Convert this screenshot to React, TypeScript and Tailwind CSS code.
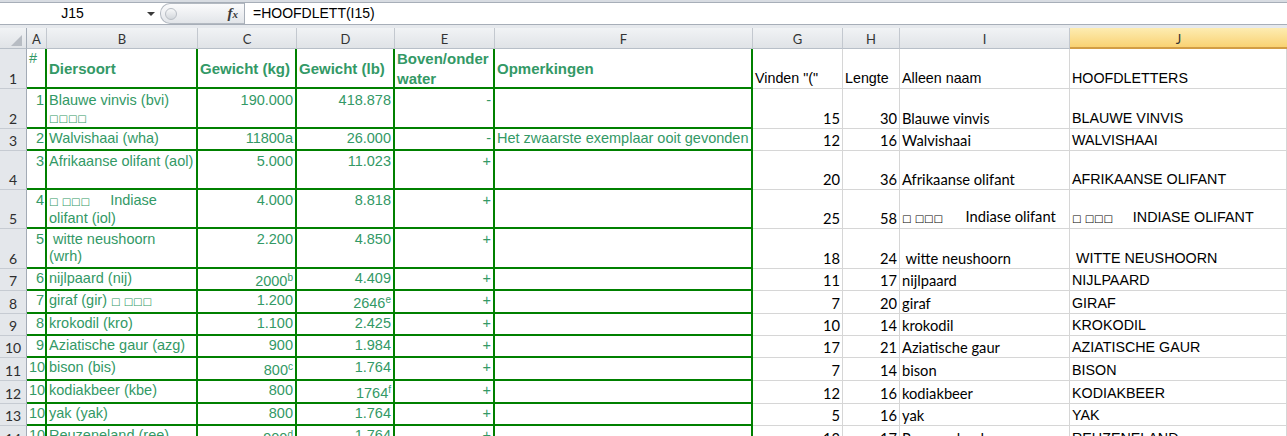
import React from 'react';

type RowSpec = {
  n: number;
  h: string;
  pt: string;
  a: React.ReactNode;
  b: React.ReactNode;
  c: React.ReactNode;
  d: React.ReactNode;
  e: React.ReactNode;
  f?: React.ReactNode;
  g: string;
  hh: string;
  i: React.ReactNode;
  j: React.ReactNode;
};

const Tofu = ({ s }: { s: string }) => (
  <span className="font-['DejaVu_Sans',sans-serif] text-[10px]">{s}</span>
);

const Sup = ({ v, s }: { v: string; s: string }) => (
  <span className="inline-block pt-[3px]">
    {v}
    <sup className="text-[10px]">{s}</sup>
  </span>
);

const rows: RowSpec[] = [
  {
    n: 2, h: 'h-[40px]', pt: 'pt-[3px]', a: '1',
    b: (<>Blauwe vinvis (bvi)<br /><Tofu s="□□□□" /></>),
    c: '190.000', d: '418.878', e: '-', g: '15', hh: '30', i: 'Blauwe vinvis', j: 'BLAUWE VINVIS',
  },
  {
    n: 3, h: 'h-[22px]', pt: 'pt-[1px]', a: '2', b: 'Walvishaai (wha)', c: '11800a', d: '26.000', e: '-',
    f: 'Het zwaarste exemplaar ooit gevonden', g: '12', hh: '16', i: 'Walvishaai', j: 'WALVISHAAI',
  },
  {
    n: 4, h: 'h-[39px]', pt: 'pt-[2px]', a: '3', b: 'Afrikaanse olifant (aol)', c: '5.000', d: '11.023', e: '+',
    g: '20', hh: '36', i: 'Afrikaanse olifant', j: 'AFRIKAANSE OLIFANT',
  },
  {
    n: 5, h: 'h-[39px]', pt: 'pt-[2px]', a: '4',
    b: (<><Tofu s="□ □□□" />{'     '}Indiase<br />olifant (iol)</>),
    c: '4.000', d: '8.818', e: '+', g: '25', hh: '58',
    i: (<><Tofu s="□ □□□" />{'      '}Indiase olifant</>),
    j: (<><Tofu s="□ □□□" />{'     '}INDIASE OLIFANT</>),
  },
  {
    n: 6, h: 'h-[40px]', pt: 'pt-[2px]', a: '5',
    b: (<>{' '}witte neushoorn<br />(wrh)</>),
    c: '2.200', d: '4.850', e: '+', g: '18', hh: '24', i: ' witte neushoorn', j: ' WITTE NEUSHOORN',
  },
  {
    n: 7, h: 'h-[22px]', pt: 'pt-[1px]', a: '6', b: 'nijlpaard (nij)', c: <Sup v="2000" s="b" />, d: '4.409', e: '+',
    g: '11', hh: '17', i: 'nijlpaard', j: 'NIJLPAARD',
  },
  {
    n: 8, h: 'h-[23px]', pt: 'pt-[1px]', a: '7', b: (<>giraf (gir) <Tofu s="□ □□□" /></>), c: '1.200',
    d: <Sup v="2646" s="e" />, e: '+', g: '7', hh: '20', i: 'giraf', j: 'GIRAF',
  },
  {
    n: 9, h: 'h-[22px]', pt: 'pt-[1px]', a: '8', b: 'krokodil (kro)', c: '1.100', d: '2.425', e: '+',
    g: '10', hh: '14', i: 'krokodil', j: 'KROKODIL',
  },
  {
    n: 10, h: 'h-[22px]', pt: 'pt-[1px]', a: '9', b: 'Aziatische gaur (azg)', c: '900', d: '1.984', e: '+',
    g: '17', hh: '21', i: 'Aziatische gaur', j: 'AZIATISCHE GAUR',
  },
  {
    n: 11, h: 'h-[23px]', pt: 'pt-[1px]', a: '10', b: 'bison (bis)', c: <Sup v="800" s="c" />, d: '1.764', e: '+',
    g: '7', hh: '14', i: 'bison', j: 'BISON',
  },
  {
    n: 12, h: 'h-[23px]', pt: 'pt-[1px]', a: '10', b: 'kodiakbeer (kbe)', c: '800', d: <Sup v="1764" s="f" />, e: '+',
    g: '12', hh: '16', i: 'kodiakbeer', j: 'KODIAKBEER',
  },
  {
    n: 13, h: 'h-[22px]', pt: 'pt-[1px]', a: '10', b: 'yak (yak)', c: '800', d: '1.764', e: '+',
    g: '5', hh: '16', i: 'yak', j: 'YAK',
  },
  {
    n: 14, h: 'h-[23px]', pt: 'pt-[1px]', a: '10', b: 'Reuzeneland (ree)', c: <Sup v="900" s="d" />, d: '1.764', e: '+',
    g: '13', hh: '17', i: 'Reuzeneland', j: 'REUZENELAND',
  },
];

const GREEN =
  "shrink-0 overflow-hidden whitespace-pre border-r-2 border-b-2 border-[#008000] px-[2px] text-[#339966] text-[14.5px] leading-[17px] font-['Liberation_Sans',Arial,sans-serif]";
const GRAY =
  'shrink-0 overflow-hidden whitespace-pre border-r border-b border-[#d6d6d6] px-[2px] pb-[1px] flex items-end text-black';
const ARIAL = "font-['Liberation_Sans',Arial,sans-serif] text-[14.3px] leading-[17px]";
const CALI = "font-['Lato',sans-serif] text-[14.7px] leading-[17px]";
const ROWHDR =
  "shrink-0 w-[27px] flex items-end justify-center pb-[1px] bg-[#e4e7eb] border-r border-r-[#a3abb6] border-b border-b-[#c6cbd2] text-[14px] leading-[17px] text-[#2e2e2e] font-['Lato',sans-serif]";

function FormulaBar() {
  return (
    <div className="h-[28px] flex flex-col bg-[#e3e6ea]">
      <div className="h-[2px] bg-[#d8dce2]" />
      <div className="h-[1px] bg-[#a7aeb8]" />
      <div className="h-[21px] flex bg-white">
        <div className="w-[160px] shrink-0 relative flex items-center">
          <span className="w-[145px] text-center text-[14px] font-['Liberation_Sans',Arial,sans-serif] text-black">
            J15
          </span>
          <svg className="absolute left-[147px] top-[9px]" width="8" height="4" viewBox="0 0 8 4">
            <path d="M0 0H8L4 4Z" fill="#3a3a3a" />
          </svg>
        </div>
        <div className="w-[84px] shrink-0 h-full rounded-l-[10px] border border-r-0 border-[#b3b9c1] bg-linear-to-b from-[#fbfbfc] to-[#e2e5e9] flex items-center">
          <div className="ml-[4px] w-[12px] h-[12px] rounded-full border border-[#b9bec5] bg-linear-to-b from-[#f7f8f9] to-[#d3d7dc]" />
          <span className="ml-auto mr-[6px] font-['Liberation_Serif',serif] italic font-bold text-[15px] leading-none text-[#3a3a3a]">
            f<span className="text-[11px]">x</span>
          </span>
        </div>
        <div className="w-px bg-[#a7aeb8]" />
        <div className="flex-1 flex items-center pl-[8px] text-[14px] font-['Liberation_Sans',Arial,sans-serif] text-black">
          =HOOFDLETT(I15)
        </div>
      </div>
      <div className="h-[1px] bg-[#a7aeb8]" />
      <div className="h-[3px] bg-[#e6e9ed]" />
    </div>
  );
}

const HDR =
  "shrink-0 flex items-center justify-center pt-[4px] border-r border-b border-r-[#c3c8cf] border-b-[#b8bfc8] bg-linear-to-b from-[#f1f3f5] to-[#e0e3e7] text-[13px] font-['Lato',sans-serif] text-[#333]";

function HeaderRow() {
  return (
    <div className="flex h-[21px]">
      <div className="shrink-0 w-[27px] relative border-r border-b border-r-[#a3abb6] border-b-[#b8bfc8] bg-linear-to-b from-[#f1f3f5] to-[#e0e3e7]">
        <svg className="absolute left-0 top-0" width="27" height="21" viewBox="0 0 27 21">
          <path d="M22 7V18H11Z" fill="#b7bcc3" />
        </svg>
      </div>
      <div className={`${HDR} w-[20px]`}>A</div>
      <div className={`${HDR} w-[151px]`}>B</div>
      <div className={`${HDR} w-[99px]`}>C</div>
      <div className={`${HDR} w-[98px]`}>D</div>
      <div className={`${HDR} w-[100px]`}>E</div>
      <div className={`${HDR} w-[258px]`}>F</div>
      <div className={`${HDR} w-[90px]`}>G</div>
      <div className={`${HDR} w-[57px]`}>H</div>
      <div className={`${HDR} w-[170px]`}>I</div>
      <div className="shrink-0 w-[217px] flex items-center justify-center pt-[4px] border-b-2 border-b-[#d29d45] bg-linear-to-b from-[#fdecb1] to-[#f9d272] text-[13px] font-['Lato',sans-serif] text-[#333]">
        J
      </div>
    </div>
  );
}

function TitleRow() {
  const bold = 'font-bold text-[15px] leading-[20px]';
  return (
    <div className="flex h-[40px]">
      <div className={ROWHDR}>1</div>
      <div className={`${GREEN} w-[20px] text-[13px] pt-[1px]`}>#</div>
      <div className={`${GREEN} w-[151px] ${bold} flex items-center pt-[1px]`}>Diersoort</div>
      <div className={`${GREEN} w-[99px] ${bold} flex items-center pt-[1px]`}>Gewicht (kg)</div>
      <div className={`${GREEN} w-[98px] ${bold} flex items-center pt-[1px]`}>Gewicht (lb)</div>
      <div className={`${GREEN} w-[100px] ${bold}`}>
        Boven/onder
        <br />
        water
      </div>
      <div className={`${GREEN} w-[258px] ${bold} flex items-center pt-[1px]`}>Opmerkingen</div>
      <div className={`${GRAY} ${ARIAL} w-[90px]`}><span>Vinden "("</span></div>
      <div className={`${GRAY} ${ARIAL} w-[57px]`}><span>Lengte</span></div>
      <div className={`${GRAY} ${ARIAL} w-[170px]`}><span>Alleen naam</span></div>
      <div className={`${GRAY} ${ARIAL} w-[217px]`}><span>HOOFDLETTERS</span></div>
    </div>
  );
}

function DataRow({ r }: { r: RowSpec }) {
  return (
    <div className={`flex ${r.h}`}>
      <div className={ROWHDR}>{r.n}</div>
      <div className={`${GREEN} ${r.pt} w-[20px] text-right pr-[1px]`}>{r.a}</div>
      <div className={`${GREEN} ${r.pt} w-[151px]`}>{r.b}</div>
      <div className={`${GREEN} ${r.pt} w-[99px] text-right`}>{r.c}</div>
      <div className={`${GREEN} ${r.pt} w-[98px] text-right`}>{r.d}</div>
      <div className={`${GREEN} ${r.pt} w-[100px] text-right`}>{r.e}</div>
      <div className={`${GREEN} ${r.pt} w-[258px]`}>{r.f ?? ''}</div>
      <div className={`${GRAY} ${CALI} w-[90px] justify-end`}><span>{r.g}</span></div>
      <div className={`${GRAY} ${CALI} w-[57px] justify-end`}><span>{r.hh}</span></div>
      <div className={`${GRAY} ${CALI} w-[170px]`}><span>{r.i}</span></div>
      <div className={`${GRAY} ${ARIAL} w-[217px]`}><span>{r.j}</span></div>
    </div>
  );
}

export default function App() {
  return (
    <div className="w-[1287px] h-[436px] overflow-hidden bg-white">
      <FormulaBar />
      <HeaderRow />
      <TitleRow />
      {rows.map((r) => (
        <DataRow key={r.n} r={r} />
      ))}
    </div>
  );
}
